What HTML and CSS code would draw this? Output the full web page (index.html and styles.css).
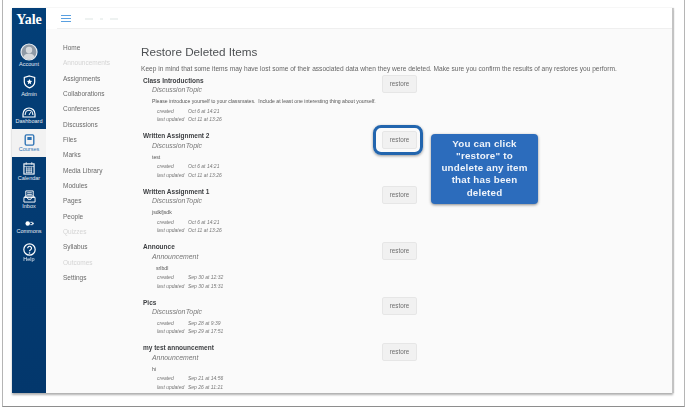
FILE: index.html
```html
<!DOCTYPE html>
<html lang="en">
<head>
<meta charset="utf-8">
<title>Restore Deleted Items</title>
<link rel="stylesheet" href="styles.css">
</head>
<body>
<div class="frame">
  <div class="shot">
    <aside class="rail">
      <div class="logo">Yale</div>
      <a class="rail-item item-account">
        <svg width="18" height="18" viewBox="0 0 18 18"><circle cx="9" cy="9" r="8" fill="#8f9aa6" stroke="#e8edf2" stroke-width="1.2"/><circle cx="9" cy="7" r="3.2" fill="#d5d9dd"/><path d="M3.4 14.2c1-2.8 3.2-3.6 5.6-3.6s4.6.8 5.6 3.6A8 8 0 0 1 3.4 14.2z" fill="#d5d9dd"/></svg>
        <span>Account</span>
      </a>
      <a class="rail-item item-admin">
        <svg width="13" height="14" viewBox="0 0 14 15"><path d="M7 1l5.600 1.600v5c0 3-2.400 5-5.600 6.200C3.800 12.600 1.400 10.600 1.400 7.600v-5z" fill="none" stroke="#fff" stroke-width="1.300"/><path d="M7 4.300l.9 1.900 2 .2-1.500 1.400.4 2L7 8.800l-1.800 1 .4-2-1.500-1.400 2-.2z" fill="#fff"/></svg>
        <span>Admin</span>
      </a>
      <a class="rail-item item-dash">
        <svg width="14" height="11" viewBox="0 0 14 11"><path d="M1 10V7a6 6 0 0 1 12 0v3z" fill="none" stroke="#fff" stroke-width="1.200"/><path d="M3.200 8V7a3.800 3.800 0 0 1 7.600 0v1M7 8l1.700-2.800" fill="none" stroke="#fff"/></svg>
        <span>Dashboard</span>
      </a>
      <a class="rail-item rail-active">
        <svg width="11" height="12" viewBox="0 0 12 14"><rect x="1" y="1" width="10" height="12" rx="1.500" fill="none" stroke="#2f74b5" stroke-width="1.600"/><rect x="3.500" y="3.500" width="5" height="3.500" fill="#2f74b5"/></svg>
        <span>Courses</span>
      </a>
      <a class="rail-item item-cal">
        <svg width="12" height="13" viewBox="0 0 13 14"><rect x="1" y="2" width="11" height="11" fill="none" stroke="#fff" stroke-width="1.200"/><path d="M1 5h11M3 7.500h7M3 9.500h7M3 11.500h7M4 5v7M6.500 5v7M9 5v7M3.500 0v3M9.500 0v3" stroke="#fff" stroke-width=".7"/></svg>
        <span>Calendar</span>
      </a>
      <a class="rail-item item-inbox">
        <svg width="13" height="13" viewBox="0 0 14 14"><path d="M3 1h8v7H3zM4.500 3h5M4.500 5h5" fill="none" stroke="#fff" stroke-width="1"/><path d="M1 8l2-1.500h8L13 8v5H1zM1 8h3.500l1 2h3l1-2H13" fill="none" stroke="#fff" stroke-width="1"/></svg>
        <span>Inbox</span>
      </a>
      <a class="rail-item item-commons">
        <svg width="9" height="7" viewBox="0 0 10 7"><circle cx="3" cy="3.500" r="2.500" fill="#fff"/><path d="M6 2.200h2.500M6 4.800h2.500" stroke="#fff"/><circle cx="8.800" cy="3.500" r="1" fill="#fff"/></svg>
        <span>Commons</span>
      </a>
      <a class="rail-item item-help">
        <svg width="13" height="13" viewBox="0 0 13 13"><circle cx="6.500" cy="6.500" r="5.700" fill="none" stroke="#fff" stroke-width="1.200"/><path d="M4.700 5.200a1.900 1.900 0 1 1 2.900 1.600c-.8.500-1.100.9-1.100 1.500" fill="none" stroke="#fff" stroke-width="1.200"/><circle cx="6.500" cy="10" r=".8" fill="#fff"/></svg>
        <span>Help</span>
      </a>
    </aside>
    <div class="page">
      <header class="topbar">
        <div class="burger"><i></i><i></i><i></i></div>
        <div class="crumbs"><b></b><b class="short"></b><b></b></div>
      </header>
      <div class="columns">
        <nav class="nav">
          <a>Home</a>
          <a class="off">Announcements</a>
          <a>Assignments</a>
          <a>Collaborations</a>
          <a>Conferences</a>
          <a>Discussions</a>
          <a>Files</a>
          <a>Marks</a>
          <a>Media Library</a>
          <a>Modules</a>
          <a>Pages</a>
          <a>People</a>
          <a class="off">Quizzes</a>
          <a>Syllabus</a>
          <a class="off">Outcomes</a>
          <a>Settings</a>
        </nav>
        <main class="main">
          <h1>Restore Deleted Items</h1>
          <p class="intro">Keep in mind that some items may have lost some of their associated data when they were deleted. Make sure you confirm the results of any restores you perform.</p>

          <section class="row">
            <div class="info">
              <h2>Class Introductions</h2>
              <div class="type">Discussion Topic</div>
              <div class="body">Please introduce yourself to your classmates.&nbsp; Include at least one interesting thing about yourself.</div>
              <dl><dt>created</dt><dd>Oct 6 at 14:21</dd><dt>last updated</dt><dd>Oct 11 at 13:26</dd></dl>
            </div>
            <button class="restore">restore</button>
          </section>

          <section class="row">
            <div class="info">
              <h2>Written Assignment 2</h2>
              <div class="type">Discussion Topic</div>
              <div class="body">test</div>
              <dl><dt>created</dt><dd>Oct 6 at 14:21</dd><dt>last updated</dt><dd>Oct 11 at 13:26</dd></dl>
            </div>
            <button class="restore">restore</button>
          </section>

          <section class="row">
            <div class="info">
              <h2>Written Assignment 1</h2>
              <div class="type">Discussion Topic</div>
              <div class="body">jsdkfjsdk</div>
              <dl><dt>created</dt><dd>Oct 6 at 14:21</dd><dt>last updated</dt><dd>Oct 11 at 13:26</dd></dl>
            </div>
            <button class="restore">restore</button>
          </section>

          <section class="row">
            <div class="info">
              <h2>Announce</h2>
              <div class="type">Announcement</div>
              <div class="body body-inset">srlbdl</div>
              <dl><dt>created</dt><dd>Sep 30 at 12:32</dd><dt>last updated</dt><dd>Sep 30 at 15:31</dd></dl>
            </div>
            <button class="restore">restore</button>
          </section>

          <section class="row">
            <div class="info">
              <h2>Pics</h2>
              <div class="type">Discussion Topic</div>
              <dl><dt>created</dt><dd>Sep 28 at 9:39</dd><dt>last updated</dt><dd>Sep 29 at 17:51</dd></dl>
            </div>
            <button class="restore">restore</button>
          </section>

          <section class="row">
            <div class="info">
              <h2>my test announcement</h2>
              <div class="type">Announcement</div>
              <div class="body">hi</div>
              <dl><dt>created</dt><dd>Sep 21 at 14:56</dd><dt>last updated</dt><dd>Sep 26 at 11:21</dd></dl>
            </div>
            <button class="restore">restore</button>
          </section>
        </main>
      </div>
    </div>
  </div>
  <div class="ring"></div>
  <div class="callout">You can click "restore" to undelete any item that has been deleted</div>
</div>
</body>
</html>
```
FILE: styles.css
```css
* { box-sizing: border-box; }
html, body { margin: 0; height: 100%; }
body {
  width: 685px;
  height: 409px;
  overflow: hidden;
  background: #fff;
  font-family: "Liberation Sans", Arial, sans-serif;
  color: #555;
}
.frame {
  position: relative;
  width: 683px;
  height: 407px;
  margin-left: 2px;
  padding: 8px 11px 13px 9px;
  border-left: 1px solid #b5b5b5;
  border-right: 1px solid #b5b5b5;
  border-bottom: 1px solid #8e8e8e;
  background: #fff;
}
.shot {
  display: flex;
  height: 385px;
  overflow: hidden;
  background: #fafafa;
  border-right: 1px solid #c4c4c4;
  box-shadow: 0 2px 2px #b0b0b0, 1px 0 1px #ccc;
  filter: blur(.3px);
}
.rail {
  flex: 0 0 34px;
  display: flex;
  flex-direction: column;
  align-items: stretch;
  background: linear-gradient(#033f78, #03376c);
  color: #fff;
}
.logo {
  height: 33px;
  padding-top: 2px;
  text-align: center;
  font-family: "Liberation Serif", serif;
  font-size: 14px;
  font-weight: bold;
  line-height: 20px;
}
.rail-item {
  display: flex;
  flex-direction: column;
  align-items: center;
  font-size: 5.500px;
  line-height: 7px;
  color: #e6edf4;
}
.rail-item svg { flex: none; }
.rail-item span { white-space: nowrap; }
.item-account { height: 31px; padding-top: 2px; }
.item-admin { height: 28px; padding-top: 3px; gap: 2px; }
.item-dash { height: 29px; padding-top: 7px; }
.rail-active {
  height: 28px;
  padding-top: 5px;
  background: #f2f2f2;
  color: #2f74b5;
}
.item-cal { height: 27px; padding-top: 5px; }
.item-inbox { height: 27px; padding-top: 6px; }
.item-commons { height: 29px; padding-top: 9px; gap: 1px; }
.item-help { padding-top: 3px; }
.page { flex: 1; display: flex; flex-direction: column; min-width: 0; }
.topbar {
  flex: 0 0 21px;
  display: flex;
  align-items: center;
  gap: 14px;
  padding-left: 15px;
  background: #fff;
  position: relative;
}
.topbar::after {
  content: "";
  position: absolute;
  left: 11px;
  right: 0;
  bottom: 0;
  height: 1px;
  background: #efefef;
}
.burger { width: 10px; display: flex; flex-direction: column; gap: 1.800px; }
.burger i { display: block; height: 1px; background: #5aa0e0; }
.crumbs { display: flex; gap: 7px; }
.crumbs b { width: 8px; height: 2px; background: #eef2f1; }
.crumbs .short { width: 3px; }
.columns { flex: 1; display: flex; min-height: 0; }
.nav {
  flex: 0 0 95px;
  display: flex;
  flex-direction: column;
  padding: 13px 0 0 17px;
}
.nav a {
  height: 15.330px;
  font-size: 6.500px;
  line-height: 12px;
  color: #6a6a6a;
  white-space: nowrap;
}
.nav .off { color: #d4d4d4; }
.main { flex: 1; padding-top: 15px; min-width: 0; }
h1 {
  margin: 0 0 5px;
  font-size: 11.700px;
  font-weight: normal;
  line-height: 15px;
  color: #4c4f52;
}
.intro {
  margin: 0 0 2.500px;
  font-size: 6.600px;
  line-height: 9px;
  color: #666;
  white-space: nowrap;
}
.row {
  display: flex;
  justify-content: space-between;
  align-items: flex-start;
  width: 276px;
  padding-left: 2px;
  margin-bottom: 7.250px;
}
.info { flex: 0 0 239px; }
h2 {
  margin: 0;
  font-size: 6.500px;
  line-height: 9px;
  font-weight: bold;
  color: #3d3f42;
  white-space: nowrap;
}
.type {
  padding: .5px 0 0 9px;
  font-size: 6.900px;
  line-height: 10px;
  font-style: italic;
  word-spacing: -1.500px;
  color: #777;
}
.body {
  padding: 2px 0 0 9px;
  font-size: 5.150px;
  line-height: 8px;
  color: #555;
  white-space: nowrap;
}
.body-inset { padding-left: 13px; }
dl {
  display: grid;
  grid-template-columns: 31px 1fr;
  margin: 1.750px 0 0 14px;
  font-size: 5px;
  line-height: 8.500px;
  font-style: italic;
  color: #777;
  white-space: nowrap;
}
dd, dt { margin: 0; }
.restore {
  flex: 0 0 35px;
  width: 35px;
  height: 18px;
  margin-top: -.5px;
  padding: 0;
  border: 1px solid #e6e6e6;
  border-radius: 2px;
  background: #f1f1f1;
  font: 6.300px/16px "Liberation Sans", Arial, sans-serif;
  color: #6e6e6e;
}
.ring {
  position: absolute;
  left: 370px;
  top: 125px;
  width: 50px;
  height: 30px;
  border: 3px solid #2265ae;
  border-radius: 8px;
  box-shadow: 0 1px 3px rgba(0, 0, 0, .4);
}
.callout {
  position: absolute;
  left: 428px;
  top: 134px;
  width: 107px;
  height: 70px;
  padding: 3.500px 10px 0;
  border-radius: 4px;
  background: #2c6cbc;
  box-shadow: 0 1px 3px rgba(0, 0, 0, .45);
  color: #eef3fa;
  font-size: 9.800px;
  font-weight: bold;
  letter-spacing: .2px;
  line-height: 12.300px;
  text-align: center;
}
```
